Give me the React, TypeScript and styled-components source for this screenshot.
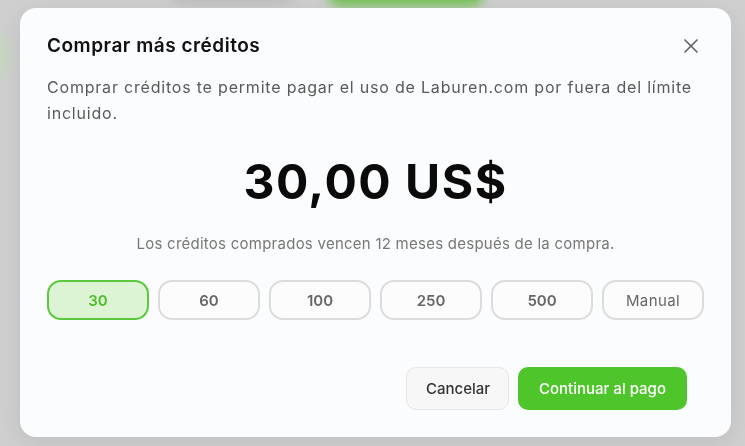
import React, { useState } from "react";
import styled, { createGlobalStyle } from "styled-components";
import { X } from "lucide-react";

const GlobalStyle = createGlobalStyle`
  html, body {
    margin: 0;
    padding: 0;
    background: #cfcfcf;
    font-family: Inter, "Noto Sans", "Liberation Sans", sans-serif;
  }
  * {
    box-sizing: border-box;
  }
`;

const AMOUNTS = ["30", "60", "100", "250", "500", "Manual"];

const App = () => {
  const [selected, setSelected] = useState("30");

  return (
    <Page>
      <GlobalStyle />
      <BehindLayer aria-hidden>
        <DarkBlob />
        <GreenBlob />
        <SideBlob />
      </BehindLayer>
      <Modal>
        <Header>
          <Title>Comprar más créditos</Title>
          <CloseButton aria-label="Cerrar">
            <X size={24} strokeWidth={1.7} />
          </CloseButton>
        </Header>
        <Description>
          Comprar créditos te permite pagar el uso de Laburen.com por fuera del
          límite incluido.
        </Description>
        <Price>30,00 US$</Price>
        <Note>Los créditos comprados vencen 12 meses después de la compra.</Note>
        <Options>
          {AMOUNTS.map((amount) => (
            <Option
              key={amount}
              $active={selected === amount}
              $manual={amount === "Manual"}
              onClick={() => setSelected(amount)}
            >
              {amount}
            </Option>
          ))}
        </Options>
        <Footer>
          <CancelButton>Cancelar</CancelButton>
          <PayButton>Continuar al pago</PayButton>
        </Footer>
      </Modal>
    </Page>
  );
};

const Page = styled.div`
  position: relative;
  width: 745px;
  height: 446px;
  overflow: hidden;
  background: #cfcfcf;
  padding: 8px 14px 9px 20px;
`;

const BehindLayer = styled.div`
  position: absolute;
  inset: 0;
  filter: blur(6px);
`;

const DarkBlob = styled.div`
  position: absolute;
  left: 170px;
  top: -30px;
  width: 125px;
  height: 34px;
  border-radius: 10px;
  background: #bdbdbd;
`;

const GreenBlob = styled.div`
  position: absolute;
  left: 328px;
  top: -30px;
  width: 156px;
  height: 36px;
  border-radius: 12px;
  background: #6fc24f;
`;

const SideBlob = styled.div`
  position: absolute;
  left: -20px;
  top: 38px;
  width: 30px;
  height: 36px;
  border-radius: 8px;
  background: #c6d6c0;
`;

const Modal = styled.div`
  position: relative;
  height: 100%;
  display: flex;
  flex-direction: column;
  padding: 26px 27px 27px;
  background: #fbfcfd;
  border-radius: 16px;
  box-shadow: 0 6px 24px rgba(0, 0, 0, 0.08);
`;

const Header = styled.div`
  display: flex;
  align-items: center;
  justify-content: space-between;
  height: 24px;
`;

const Title = styled.h2`
  margin: 0;
  font-size: 19px;
  line-height: 24px;
  font-weight: 600;
  letter-spacing: 0.5px;
  color: #111;
`;

const CloseButton = styled.button`
  display: flex;
  align-items: center;
  justify-content: center;
  width: 24px;
  height: 24px;
  margin-right: 1px;
  padding: 0;
  border: none;
  background: none;
  color: #666;
  cursor: pointer;
`;

const Description = styled.p`
  margin: 16px 0 0;
  font-size: 16px;
  line-height: 26px;
  letter-spacing: 0.8px;
  color: #5a5a5a;
`;

const Price = styled.div`
  margin-top: 27px;
  text-align: center;
  font-size: 48px;
  line-height: 58px;
  font-weight: 700;
  letter-spacing: 1.5px;
  color: #0a0a0a;
`;

const Note = styled.p`
  margin: 23px 0 0;
  text-align: center;
  font-size: 15px;
  line-height: 20px;
  letter-spacing: 0.25px;
  color: #777;
`;

const Options = styled.div`
  margin-top: 26px;
  display: grid;
  grid-template-columns: repeat(6, 1fr);
  gap: 9px;
`;

const Option = styled.button<{ $active: boolean; $manual: boolean }>`
  height: 40px;
  border-radius: 14px;
  border: 2px solid ${({ $active }) => ($active ? "#5cc83c" : "#dcdcdc")};
  background: ${({ $active }) => ($active ? "#dcf4d3" : "#fcfcfd")};
  color: ${({ $active }) => ($active ? "#4cbd2b" : "#666")};
  font-family: inherit;
  font-size: 15px;
  font-weight: ${({ $manual }) => ($manual ? 400 : 600)};
  letter-spacing: ${({ $manual }) => ($manual ? "0.4px" : "0")};
  cursor: pointer;
`;

const Footer = styled.div`
  margin-top: auto;
  margin-right: 17px;
  display: flex;
  justify-content: flex-end;
  gap: 9px;
`;

const BaseButton = styled.button`
  height: 43px;
  padding: 0 19px;
  border-radius: 10px;
  font-family: inherit;
  font-size: 15px;
  font-weight: 500;
  cursor: pointer;
`;

const CancelButton = styled(BaseButton)`
  width: 103px;
  background: #f7f7f7;
  border: 1.5px solid #e6e6e6;
  color: #333;
`;

const PayButton = styled(BaseButton)`
  width: 169px;
  background: #4ec52a;
  border: none;
  color: #fff;
`;

export default App;
